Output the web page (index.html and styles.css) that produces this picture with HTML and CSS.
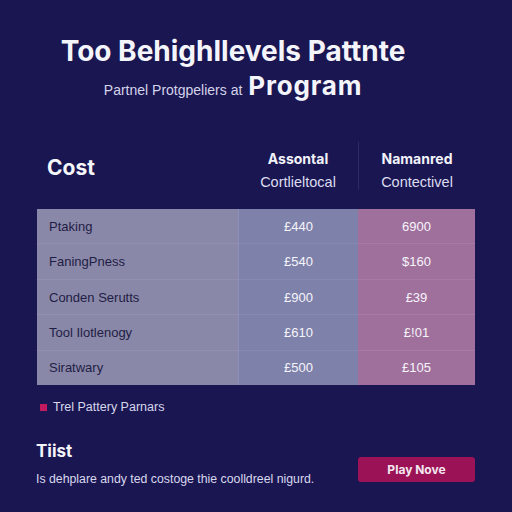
FILE: index.html
```html
<!DOCTYPE html>
<html>
<head>
<meta charset="utf-8">
<link rel="stylesheet" href="styles.css">
</head>
<body>
<div class="page">
  <header class="hero">
    <h1 class="title">Too Behighllevels Pattnte</h1>
    <div class="subline"><span class="sub-small">Partnel Protgpeliers at</span><span class="sub-big">Program</span></div>
  </header>

  <div class="thead">
    <div class="th-cost">Cost</div>
    <div class="th-col">
      <div class="th-name">Assontal</div>
      <div class="th-sub">Cortlieltocal</div>
    </div>
    <div class="th-col th-divided">
      <div class="th-name">Namanred</div>
      <div class="th-sub">Contectivel</div>
    </div>
  </div>

  <div class="table">
    <div class="col col-a">
      <div class="cell label">Ptaking</div>
      <div class="cell label">FaningPness</div>
      <div class="cell label">Conden Serutts</div>
      <div class="cell label">Tool Ilotlenogy</div>
      <div class="cell label">Siratwary</div>
    </div>
    <div class="col col-b">
      <div class="cell val">£440</div>
      <div class="cell val">£540</div>
      <div class="cell val">£900</div>
      <div class="cell val">£610</div>
      <div class="cell val">£500</div>
    </div>
    <div class="col col-c">
      <div class="cell val">6900</div>
      <div class="cell val">$160</div>
      <div class="cell val">£39</div>
      <div class="cell val">£!01</div>
      <div class="cell val">£105</div>
    </div>
  </div>

  <div class="legend"><span class="swatch"></span><span>Trel Pattery Parnars</span></div>

  <div class="footer">
    <div class="foot-text">
      <div class="foot-title">Tiist</div>
      <div class="foot-desc">Is dehplare andy ted costoge thie coolldreel nigurd.</div>
    </div>
    <button class="cta">Play Nove</button>
  </div>
</div>
</body>
</html>
```

FILE: styles.css
```css
* { box-sizing: border-box; margin: 0; padding: 0; }
html, body { width: 512px; height: 512px; }
body {
  background: #1a1651;
  font-family: "Open Sans", "Liberation Sans", sans-serif;
  color: #ffffff;
  overflow: hidden;
}
.page {
  padding: 34px 37px 0 37px;
}
.hero {
  display: flex;
  flex-direction: column;
  align-items: center;
  padding-right: 46px;
}
.title {
  font-family: "Inter", "Open Sans", sans-serif;
  font-weight: 700;
  font-size: 28px;
  line-height: 34px;
  letter-spacing: 0;
  color: #f4f4fb;
}
.subline {
  display: flex;
  align-items: baseline;
  gap: 6px;
  margin-top: 2px;
}
.sub-small {
  font-family: "Liberation Sans", sans-serif;
  font-size: 14px;
  color: #d4d4ea;
}
.sub-big {
  font-family: "Inter", sans-serif;
  font-weight: 700;
  font-size: 26px;
  letter-spacing: 0.8px;
  line-height: 32px;
  color: #f4f4fb;
}
.thead {
  display: grid;
  grid-template-columns: 201px 120px 117px;
  margin-top: 40px;
  height: 67px;
}
.th-cost {
  font-family: "Inter", sans-serif;
  font-weight: 700;
  font-size: 21px;
  padding-left: 10px;
  padding-top: 13px;
  color: #f6f6fb;
}
.th-col {
  display: flex;
  flex-direction: column;
  align-items: center;
  padding-top: 8px;
}
.th-divided {
  border-left: 1px solid #2c2a68;
  height: 48px;
}
.th-name {
  font-family: "Inter", sans-serif;
  font-weight: 700;
  font-size: 14px;
  line-height: 17px;
  color: #f2f2fa;
}
.th-sub {
  font-family: "Liberation Sans", sans-serif;
  font-size: 14.5px;
  line-height: 17px;
  margin-top: 7px;
  color: #dcdcf0;
}
.table {
  display: grid;
  grid-template-columns: 201px 120px 117px;
  height: 176px;
}
.col { display: flex; flex-direction: column; }
.col-a { background: #8a88a8; }
.col-b { background: #7e82aa; border-left: 1px solid #8e90b6; }
.col-c { background: #a0709c; }
.cell {
  flex: 1;
  display: flex;
  align-items: center;
  font-family: "Liberation Sans", sans-serif;
  font-size: 13px;
  border-bottom: 1px solid rgba(255,255,255,0.07);
}
.cell:last-child { border-bottom: none; }
.label {
  padding-left: 12px;
  color: #1f1d45;
}
.val {
  justify-content: center;
  color: #f6f4fb;
}
.legend {
  display: flex;
  align-items: center;
  gap: 6px;
  margin-top: 15px;
  padding-left: 3px;
  font-family: "Liberation Sans", sans-serif;
  font-size: 12.5px;
  color: #d6d6ec;
}
.swatch {
  width: 7px;
  height: 7px;
  background: #c2195f;
}
.footer {
  display: flex;
  justify-content: space-between;
  align-items: flex-start;
  margin-top: 26px;
}
.foot-title {
  font-family: "Inter", sans-serif;
  font-weight: 700;
  font-size: 17px;
  line-height: 22px;
  margin-left: -1px;
  color: #f4f4fb;
}
.foot-desc {
  font-family: "Liberation Sans", sans-serif;
  font-size: 12.3px;
  margin-top: 10px;
  margin-left: -1px;
  color: #d8d8ee;
}
.cta {
  margin-top: 17px;
  width: 117px;
  height: 25px;
  background: #9b1257;
  border: none;
  border-radius: 3px;
  color: #f2e8f0;
  font-family: "Inter", sans-serif;
  font-weight: 700;
  font-size: 12px;
}
```
